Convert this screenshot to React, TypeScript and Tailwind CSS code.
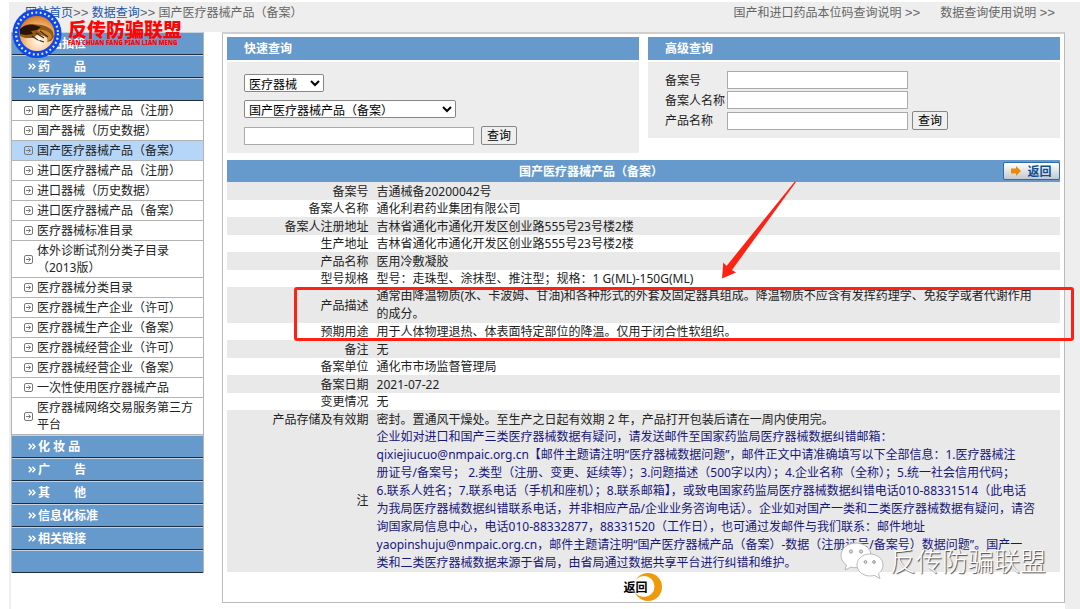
import React from 'react';

const topMenu = ['药品抽检', '药　　品', '医疗器械'];

const deviceMenu = [
    '国产医疗器械产品（注册）',
    '国产器械（历史数据）',
    '国产医疗器械产品（备案）',
    '进口医疗器械产品（注册）',
    '进口器械（历史数据）',
    '进口医疗器械产品（备案）',
    '医疗器械标准目录',
    '体外诊断试剂分类子目录\n（2013版）',
    '医疗器械分类目录',
    '医疗器械生产企业（许可）',
    '医疗器械生产企业（备案）',
    '医疗器械经营企业（许可）',
    '医疗器械经营企业（备案）',
    '一次性使用医疗器械产品',
    '医疗器械网络交易服务第三方\n平台',
];

const bottomMenu = ['化 妆 品', '广　　告', '其　　他', '信息化标准', '相关链接', ''];

const activeItem = '国产医疗器械产品（备案）';

interface Row {
    label: string;
    value: string;
    note?: boolean;
}

const rows: Row[] = [
    { label: '备案号', value: '吉通械备20200042号' },
    { label: '备案人名称', value: '通化利君药业集团有限公司' },
    { label: '备案人注册地址', value: '吉林省通化市通化开发区创业路555号23号楼2楼' },
    { label: '生产地址', value: '吉林省通化市通化开发区创业路555号23号楼2楼' },
    { label: '产品名称', value: '医用冷敷凝胶' },
    { label: '型号规格', value: '型号：走珠型、涂抹型、推注型；规格：1 G(ML)-150G(ML)' },
    {
        label: '产品描述',
        value: '通常由降温物质(水、卡波姆、甘油)和各种形式的外套及固定器具组成。降温物质不应含有发挥药理学、免疫学或者代谢作用\n的成分。',
    },
    { label: '预期用途', value: '用于人体物理退热、体表面特定部位的降温。仅用于闭合性软组织。' },
    { label: '备注', value: '无' },
    { label: '备案单位', value: '通化市市场监督管理局' },
    { label: '备案日期', value: '2021-07-22' },
    { label: '变更情况', value: '无' },
    { label: '产品存储及有效期', value: '密封。置通风干燥处。至生产之日起有效期 2 年，产品打开包装后请在一周内使用完。' },
    {
        label: '注',
        note: true,
        value: [
            '企业如对进口和国产三类医疗器械数据有疑问，请发送邮件至国家药监局医疗器械数据纠错邮箱：',
            'qixiejiucuo@nmpaic.org.cn【邮件主题请注明“医疗器械数据问题”，邮件正文中请准确填写以下全部信息：1.医疗器械注',
            '册证号/备案号； 2.类型（注册、变更、延续等）；3.问题描述（500字以内）；4.企业名称（全称）；5.统一社会信用代码；',
            '6.联系人姓名；7.联系电话（手机和座机）；8.联系邮箱】，或致电国家药监局医疗器械数据纠错电话010-88331514（此电话',
            '为我局医疗器械数据纠错联系电话，并非相应产品/企业业务咨询电话）。企业如对国产一类和二类医疗器械数据有疑问，请咨',
            '询国家局信息中心，电话010-88332877，88331520（工作日），也可通过发邮件与我们联系：邮件地址',
            'yaopinshuju@nmpaic.org.cn，邮件主题请注明“国产医疗器械产品（备案）-数据（注册证号/备案号）数据问题”。国产一',
            '类和二类医疗器械数据来源于省局，由省局通过数据共享平台进行纠错和维护。',
        ].join('\n'),
    },
];

const MenuHeading: React.FC<{ text: string }> = ({ text }) => (
    <a
        href="#"
        className="flex h-[23px] items-center gap-[2px] border-t border-b border-t-[#c3d3e2] border-b-[#1d2c3a] bg-[#6699cc] pl-4 font-bold text-white"
    >
        {text && (
            <svg viewBox="0 0 8 7" className="h-[7px] w-2" fill="none" stroke="#fff" strokeWidth="1.6">
                <path d="M0.8 0.8 3.4 3.5 0.8 6.2M4.4 0.8 7 3.5 4.4 6.2" />
            </svg>
        )}
        <span className="whitespace-pre">{text}</span>
    </a>
);

const MenuItem: React.FC<{ text: string }> = ({ text }) => {
    const tall = text.includes('\n');
    return (
        <a
            href="#"
            className={`flex items-center border-b border-[#b4b4b4] pl-3 text-[#222] ${tall ? 'h-[37px]' : 'h-5'} ${
                text === activeItem ? 'bg-[#b5d6f9]' : 'bg-white'
            }`}
        >
            <svg viewBox="0 0 9 9" className="mr-1 h-[9px] w-[9px] shrink-0" fill="none" stroke="#777">
                <rect x="0.5" y="0.5" width="8" height="8" rx="1.5" />
                <path d="M2 4.5H6.4M4.5 2.5 6.6 4.5 4.5 6.5" />
            </svg>
            <span className="leading-[17px] whitespace-pre">{text}</span>
        </a>
    );
};

const PanelTitle: React.FC<{ text: string }> = ({ text }) => (
    <h2 className="flex h-[23px] items-center bg-[#6699cc] pl-[17px] font-bold text-white">{text}</h2>
);

const Arrows = () => <span className="font-['Liberation_Mono',monospace] text-[13px]">&gt;&gt;</span>;

const inputClass = 'h-[18px] border border-[#aaa] bg-white px-1 outline-none';
const buttonClass = 'h-[19px] rounded-[2px] border border-[#868686] bg-[#efefef] px-[5px] leading-[17px] text-black';
const selectClass = 'h-[18px] rounded-[2px] border border-[#868686] bg-white text-black';

const LogoBadge = () => (
    <div className="absolute top-[9px] left-3 flex items-start gap-[6px] text-[#fb0505]">
        <svg viewBox="0 0 50 50" className="h-[50px] w-[50px]">
            <defs>
                <radialGradient id="glow" cx="0.55" cy="0.7" r="0.7">
                    <stop offset="0" stopColor="#fffaf2" />
                    <stop offset="0.45" stopColor="#fbd0a0" />
                    <stop offset="1" stopColor="#d9781f" />
                </radialGradient>
            </defs>
            <circle cx="25" cy="24.5" r="24.5" fill="#0f48e6" />
            <circle cx="25" cy="24.5" r="21" fill="none" stroke="#dfe9ff" strokeWidth="2.2" strokeDasharray="1.8 2.6" />
            <circle cx="25" cy="24.5" r="17.5" fill="url(#glow)" />
            <path d="M8 21C10 17 14 15 20 15L30 16C34 17 39 19 41 23L42 28 39 32 35 33C37 30 35 28 32 27L26 25 21 29 13 29 8 27Z" fill="#8f5a18" />
            <path d="M8 20C11 17 16 15 22 16L29 18 25 21 19 22 21 25 14 26 8 25Z" fill="#2a1505" />
            <path d="M25 21C30 20 35 21 39 25L40 29 36 32 35 28 30 25Z" fill="#c9852f" />
            <path d="M24 24 32 29M28 22 36 28M20 27 26 31 32 33" fill="none" stroke="#3d2008" strokeWidth="1.1" />
            <path d="M27 27l1 2 2 .5-2 .8-1 2-1-2-2-.8 2-.5Z" fill="#fff" />
        </svg>
        <div className="pt-3">
            <p className="text-[19px] leading-[18px] font-black whitespace-nowrap">反传防骗联盟</p>
            <p className="text-[6px] leading-[8px] font-black whitespace-nowrap">FAN CHUAN FANG PIAN LIAN MENG</p>
        </div>
    </div>
);

const Watermark = () => (
    <div className="pointer-events-none absolute top-[542px] right-[34px] flex items-center gap-[6px]">
        <svg viewBox="0 0 44 38" className="h-[38px] w-11" fill="#fff" stroke="#aaa" strokeWidth="0.8">
            <path d="M16 1C7.500 1 1 6.500 1 13.500c0 4 2.200 7.300 5.500 9.500L5 28l6-3c1.600.5 3.300.7 5 .7C24.500 25.700 31 20.500 31 13.500S24.500 1 16 1Z" />
            <path d="M30 12c-7.300 0-13 4.900-13 11s5.700 11 13 11c1.500 0 3-.2 4.300-.6L40 36.500l-1.500-4.700C41.300 29.700 43 26.600 43 23c0-6.100-5.700-11-13-11Z" />
            <g fill="#ddd" stroke="#888">
                <circle cx="11" cy="9.500" r="1.600" />
                <circle cx="21" cy="9.500" r="1.600" />
                <circle cx="25.500" cy="20" r="1.400" />
                <circle cx="34" cy="20" r="1.400" />
            </g>
        </svg>
        <span className="text-[26px] leading-[38px] font-light whitespace-nowrap text-white [text-shadow:1px_1px_1px_#444]">
            反传防骗联盟
        </span>
    </div>
);

const Sidebar = () => (
    <nav className="w-[193px] shrink-0 self-start border-x border-[#b4b4b4]">
        {topMenu.map((text) => (
            <MenuHeading key={text} text={text} />
        ))}
        {deviceMenu.map((text) => (
            <MenuItem key={text} text={text} />
        ))}
        {bottomMenu.map((text) => (
            <MenuHeading key={text} text={text} />
        ))}
    </nav>
);

const SearchPanels = () => (
    <div className="grid grid-cols-2 items-start gap-[9px]">
        <section>
            <PanelTitle text="快速查询" />
            <form className="mt-[2px] flex flex-col items-start gap-2 bg-[#ededed] pt-3 pb-2 pl-[17px]">
                <select aria-label="类别" className={`${selectClass} w-20`}>
                    <option>医疗器械</option>
                </select>
                <select aria-label="数据库" className={`${selectClass} w-[212px]`}>
                    <option>国产医疗器械产品（备案）</option>
                </select>
                <div className="flex items-center gap-[7px]">
                    <input type="text" aria-label="关键字" className={`${inputClass} w-[230px]`} />
                    <button type="button" className={buttonClass}>查询</button>
                </div>
            </form>
        </section>
        <section>
            <PanelTitle text="高级查询" />
            <form className="mt-[2px] flex flex-col gap-[2px] bg-[#ededed] pt-[9px] pb-2 pl-[17px]">
                <div className="flex items-center">
                    <label htmlFor="recordNo" className="w-[62px]">备案号</label>
                    <input id="recordNo" type="text" className={`${inputClass} w-[181px]`} />
                </div>
                <div className="flex items-center">
                    <label htmlFor="holder" className="w-[62px]">备案人名称</label>
                    <input id="holder" type="text" className={`${inputClass} w-[181px]`} />
                </div>
                <div className="flex items-center">
                    <label htmlFor="product" className="w-[62px]">产品名称</label>
                    <input id="product" type="text" className={`${inputClass} mr-1 w-[181px]`} />
                    <button type="button" className={buttonClass}>查询</button>
                </div>
            </form>
        </section>
    </div>
);

const Detail = () => (
    <section className="mt-[7px]">
        <div className="flex h-[22px] items-center bg-[#6699cc]">
            <h1 className="flex-1 text-center font-bold text-white">国产医疗器械产品（备案）</h1>
            <div className="flex w-[105px] justify-end">
                <button
                    type="button"
                    className="flex h-[18px] w-[57px] items-center justify-center gap-[6px] rounded-[2px] border border-[#2d6bab] bg-linear-to-b from-white to-[#c4c9ce] font-bold text-[#0d4f94]"
                >
                    <svg viewBox="0 0 10 10" className="h-[10px] w-[10px]" fill="#e98a0c">
                        <path d="M0 2.500H5V0L10 5 5 10V7.500H0Z" />
                    </svg>
                    返回
                </button>
            </div>
        </div>
        <table className="w-full border-collapse">
            <tbody>
                {rows.map((row, i) => {
                    const shaded = i % 2 === 0 || row.note;
                    const multiline = row.value.includes('\n');
                    return (
                        <tr key={row.label} className={shaded ? 'h-[18px] bg-[#e9e9e9]' : 'h-[17px] bg-white'}>
                            <th scope="row" className="w-[17%] p-0 text-right align-middle font-normal">
                                {row.label}
                            </th>
                            <td
                                className={`p-0 pl-2 whitespace-pre ${multiline ? 'leading-[18px]' : ''} ${
                                    row.note ? 'text-[#17177a]' : ''
                                }`}
                            >
                                {row.value}
                            </td>
                        </tr>
                    );
                })}
            </tbody>
        </table>
        <div className="flex h-[30px] items-center justify-center">
            <button type="button" className="relative flex h-7 items-center font-bold text-black">
                <svg viewBox="0 0 30 28" className="absolute left-[10px] h-7 w-[30px]">
                    <circle cx="15" cy="14" r="14" fill="#ef9a0c" />
                    <circle cx="11" cy="13.500" r="10.500" fill="#fff" />
                </svg>
                <span className="relative mr-4">返回</span>
            </button>
        </div>
    </section>
);

export default function App() {
    return (
        <div className="relative min-h-screen overflow-hidden bg-white pt-[2px] pl-[9px] font-['Noto_Sans','Noto_Sans_CJK_SC',sans-serif] text-[12px] leading-[17px] text-[#222]">
            <div className="min-h-[calc(100vh-2px)] bg-[#eee] pr-[15px] pl-[2px]">
                <header className="flex h-[30px] justify-between pl-[14px] text-[#666]">
                    <p className="pt-[2px] whitespace-nowrap">
                        <a href="#" className="text-[#2456a5]">网站首页</a>
                        <Arrows />{' '}
                        <a href="#" className="text-[#2456a5]">数据查询</a>
                        <Arrows /> 国产医疗器械产品（备案）
                    </p>
                    <p className="flex gap-5 pt-[2px] pr-[10px] whitespace-nowrap">
                        <a href="#">国产和进口药品本位码查询说明 <Arrows /></a>
                        <a href="#">数据查询使用说明 <Arrows /></a>
                    </p>
                </header>
                <div className="flex min-h-[calc(100vh-32px)] gap-[18px] bg-white">
                    <Sidebar />
                    <main className="min-w-0 flex-1 self-start border border-t-2 border-[#bbb] border-t-[#d0d0d0] p-1 pt-[3px] pb-0">
                        <SearchPanels />
                        <Detail />
                    </main>
                </div>
            </div>

            <LogoBadge />
            <Watermark />

            {/* callout over the description rows */}
            <div className="pointer-events-none absolute top-[287px] right-[6px] left-[294px] h-[54px] rounded-[3px] border-3 border-[#ff2214]" />
            <svg viewBox="0 0 75 98" className="pointer-events-none absolute top-[181px] right-[284px] h-[98px] w-[75px]" fill="#ff2214">
                <path d="M1 97.500 2.300 81.500 5.500 85 73.800 0.500 74.800 1.200 11 89 15 91.500Z" />
            </svg>
        </div>
    );
}
